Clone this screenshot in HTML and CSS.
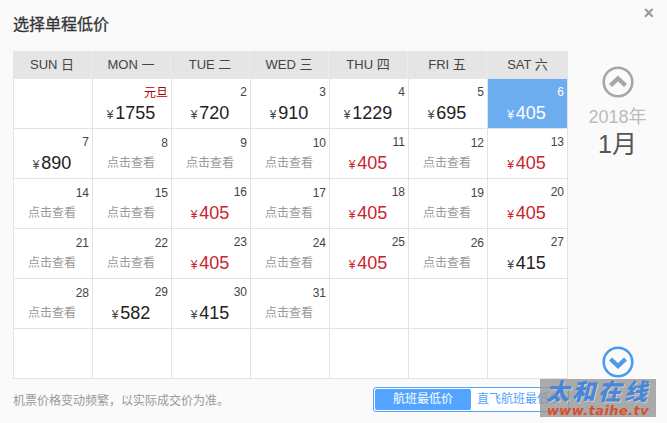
FILE: index.html
```
<!DOCTYPE html>
<html lang="zh">
<head>
<meta charset="utf-8">
<title>选择单程低价</title>
<link rel="stylesheet" href="styles.css">
</head>
<body>
<div class="dialog">
  <header class="head">
    <h1 class="title">选择单程低价</h1>
    <span class="close">×</span>
  </header>
  <div class="main">
    <div class="calendar">
      <div class="weeks">
        <div>SUN 日</div><div>MON 一</div><div>TUE 二</div><div>WED 三</div><div>THU 四</div><div>FRI 五</div><div>SAT 六</div>
      </div>
      <div class="days">
        <div class="day"></div>
        <div class="day"><span class="num holiday">元旦</span><span class="price"><i>¥</i>1755</span></div>
        <div class="day"><span class="num">2</span><span class="price"><i>¥</i>720</span></div>
        <div class="day"><span class="num">3</span><span class="price"><i>¥</i>910</span></div>
        <div class="day"><span class="num">4</span><span class="price"><i>¥</i>1229</span></div>
        <div class="day"><span class="num">5</span><span class="price"><i>¥</i>695</span></div>
        <div class="day selected"><span class="num">6</span><span class="price"><i>¥</i>405</span></div>

        <div class="day"><span class="num">7</span><span class="price"><i>¥</i>890</span></div>
        <div class="day"><span class="num">8</span><span class="check">点击查看</span></div>
        <div class="day"><span class="num">9</span><span class="check">点击查看</span></div>
        <div class="day"><span class="num">10</span><span class="check">点击查看</span></div>
        <div class="day"><span class="num">11</span><span class="price low"><i>¥</i>405</span></div>
        <div class="day"><span class="num">12</span><span class="check">点击查看</span></div>
        <div class="day"><span class="num">13</span><span class="price low"><i>¥</i>405</span></div>

        <div class="day"><span class="num">14</span><span class="check">点击查看</span></div>
        <div class="day"><span class="num">15</span><span class="check">点击查看</span></div>
        <div class="day"><span class="num">16</span><span class="price low"><i>¥</i>405</span></div>
        <div class="day"><span class="num">17</span><span class="check">点击查看</span></div>
        <div class="day"><span class="num">18</span><span class="price low"><i>¥</i>405</span></div>
        <div class="day"><span class="num">19</span><span class="check">点击查看</span></div>
        <div class="day"><span class="num">20</span><span class="price low"><i>¥</i>405</span></div>

        <div class="day"><span class="num">21</span><span class="check">点击查看</span></div>
        <div class="day"><span class="num">22</span><span class="check">点击查看</span></div>
        <div class="day"><span class="num">23</span><span class="price low"><i>¥</i>405</span></div>
        <div class="day"><span class="num">24</span><span class="check">点击查看</span></div>
        <div class="day"><span class="num">25</span><span class="price low"><i>¥</i>405</span></div>
        <div class="day"><span class="num">26</span><span class="check">点击查看</span></div>
        <div class="day"><span class="num">27</span><span class="price"><i>¥</i>415</span></div>

        <div class="day"><span class="num">28</span><span class="check">点击查看</span></div>
        <div class="day"><span class="num">29</span><span class="price"><i>¥</i>582</span></div>
        <div class="day"><span class="num">30</span><span class="price"><i>¥</i>415</span></div>
        <div class="day"><span class="num">31</span><span class="check">点击查看</span></div>
        <div class="day"></div>
        <div class="day"></div>
        <div class="day"></div>

        <div class="day"></div><div class="day"></div><div class="day"></div><div class="day"></div><div class="day"></div><div class="day"></div><div class="day"></div>
      </div>
    </div>
    <aside class="side">
      <svg class="arrow up" viewBox="0 0 32 32" width="32" height="32"><circle cx="16" cy="16" r="14.3" fill="none" stroke="#a6a6a6" stroke-width="2.6"/><path d="M8.5 19.5 16 12.5l7.5 7" fill="none" stroke="#a6a6a6" stroke-width="4.4"/></svg>
      <div class="year">2018年</div>
      <div class="month">1月</div>
      <svg class="arrow down" viewBox="0 0 32 32" width="32" height="32"><circle cx="16" cy="16" r="14.3" fill="none" stroke="#4a9bec" stroke-width="2.6"/><path d="M8.5 13 16 20l7.5-7" fill="none" stroke="#4a9bec" stroke-width="4.4"/></svg>
    </aside>
  </div>
  <footer class="foot">
    <p class="note">机票价格变动频繁，以实际成交价为准。</p>
    <div class="tabs">
      <span class="tab active">航班最低价</span>
      <span class="tab">直飞航班最低价</span>
    </div>
  </footer>
</div>
<div class="mark">
  <div class="mark-cn">太和在线</div>
  <div class="mark-en">www.taihe.tv</div>
</div>
</body>
</html>
```
FILE: styles.css
```
* { box-sizing: border-box; }
html, body { margin: 0; padding: 0; }
body {
  width: 667px;
  height: 423px;
  background: #fafafa;
  overflow: hidden;
  position: relative;
  font-family: "Liberation Sans", "Noto Sans CJK SC", sans-serif;
  color: #333;
}
.dialog { padding: 0 0 0 13px; }
.head {
  height: 51px;
  display: flex;
  justify-content: space-between;
  align-items: flex-start;
}
.title {
  margin: 15px 0 0;
  font-size: 16px;
  line-height: 20px;
  font-weight: 400;
  color: #333;
  -webkit-text-stroke: 0.3px #333;
}
.close {
  margin: 4px 13px 0 0;
  font-size: 18px;
  line-height: 18px;
  font-weight: 700;
  color: #999;
}
.main { display: flex; }
.calendar { width: 555px; }
.weeks {
  display: grid;
  grid-template-columns: 79px repeat(5, 79px) 1fr;
  height: 28px;
  background: #e5e5e5;
  font-size: 13px;
  line-height: 28px;
  text-align: center;
  color: #444;
}
.weeks div { border-right: 1px solid #ececec; }
.weeks div:last-child { border-right: 0; }
.days {
  display: grid;
  grid-template-columns: repeat(6, 79px) 80px;
  grid-auto-rows: 50px;
  border-left: 1px solid #e3e3e3;
  width: 555px;
  background: #fff;
}
.day {
  border-right: 1px solid #e3e3e3;
  border-bottom: 1px solid #e3e3e3;
  padding: 5px 3px 0 0;
  display: flex;
  flex-direction: column;
  text-align: center;
}
.day:has(.check) { padding-top: 6px; }
.num {
  display: block;
  text-align: right;
  font-size: 12px;
  line-height: 16px;
  color: #444;
}
.holiday { color: #a00; margin-top: 1px; }
.price {
  font-size: 18px;
  line-height: 22px;
  color: #222;
  margin-top: 2px;
  padding-left: 1px;
}
.holiday + .price { margin-top: 1px; }
.price i {
  font-style: normal;
  font-size: 12px;
  margin-right: 2px;
  color: #444;
}
.low, .low i { color: #c9252d; }
.check {
  font-size: 12px;
  line-height: 20px;
  color: #999;
  padding-left: 1px;
  margin-top: 2px;
}
.selected { background: #6cadf0; }
.selected .num, .selected .price, .selected .price i { color: #fff; }
.side {
  width: 99px;
  display: flex;
  flex-direction: column;
  align-items: center;
  padding-top: 15px;
  height: 327px;
}
.arrow { display: block; }
.year { margin-top: 8px; font-size: 18px; line-height: 22px; color: #bbb; }
.month { margin-top: 2px; font-size: 25px; line-height: 28px; color: #555; }
.down { margin-top: auto; }
.foot {
  display: flex;
  align-items: flex-start;
  padding-top: 8px;
}
.note { margin: 6px 0 0; width: 360px; font-size: 12px; line-height: 16px; color: #999; }
.tabs {
  display: flex;
  width: 196px;
  height: 25px;
  padding: 1px;
  border: 1px solid #52a4ff;
  border-radius: 3px;
  font-size: 12px;
  line-height: 21px;
  color: #52a4ff;
  white-space: nowrap;
  background: #fff;
}
.tab { padding: 0 4px; }
.tab.active {
  width: 96px;
  margin-right: 2px;
  background: #52a4ff;
  color: #fff;
  border-radius: 2px;
  text-align: center;
}
.mark {
  position: absolute;
  left: 540px;
  top: 379px;
  width: 116px;
  height: 38px;
  background: rgba(150,150,150,.8);
  text-align: center;
  overflow: hidden;
}
.mark-cn {
  font-size: 23px;
  line-height: 24px;
  margin-top: 1px;
  font-weight: 900;
  font-style: italic;
  letter-spacing: 3px;
  color: #4a86d8;
  text-shadow: 1px 1px 0 rgba(255,255,255,.45);
}
.mark-en {
  font-size: 13px;
  line-height: 13px;
  font-weight: 700;
  font-style: italic;
  font-family: "DejaVu Sans", sans-serif;
  letter-spacing: .4px;
  color: #d9502a;
}
```
